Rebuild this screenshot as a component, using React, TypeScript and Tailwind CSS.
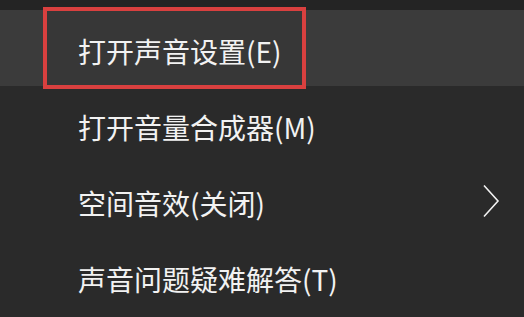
const items = [
  { label: '打开声音设置(E)', active: true },
  { label: '打开音量合成器(M)' },
  { label: '空间音效(关闭)', sub: true },
  { label: '声音问题疑难解答(T)' },
]

export default function App() {
  return (
    <div
      className="relative w-[524px] h-[317px] overflow-hidden bg-[#2a2a2a] text-[#f2f2f2]"
      style={{ fontFamily: '"Noto Sans CJK SC", "Noto Sans", sans-serif' }}
    >
      <div className="h-[10px] bg-[#242424]" />
      <div className="flex flex-col">
        {items.map(item => (
          <div
            key={item.label}
            className={`relative flex items-center h-[76px] pl-[78px] pr-[24px] pt-[5px] ${item.active ? 'bg-[#3b3b3b]' : ''}`}
          >
            {/* red highlight frame */}
            {item.active && (
              <div className="absolute left-[43px] top-[-3px] w-[263px] h-[82px] border-[4px] border-[#d9403f] bg-[#373737]" />
            )}
            <span className="relative text-[28px] leading-none">{item.label}</span>
            {item.sub && (
              <svg className="ml-auto mt-[-4px]" width="18" height="34" viewBox="0 0 18 34" fill="none">
                <path d="M2 1.5 L16 17 L2 32.5" stroke="#f2f2f2" strokeWidth="1.6" />
              </svg>
            )}
          </div>
        ))}
      </div>
    </div>
  )
}
